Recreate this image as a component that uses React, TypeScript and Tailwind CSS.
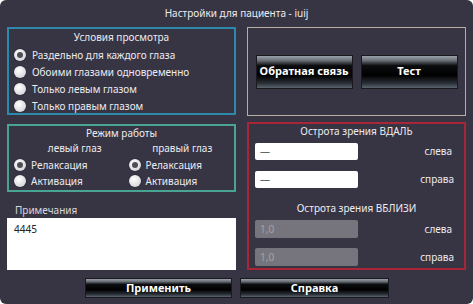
export default function App() {
  const viewModes = [
    { id: 'split', label: 'Раздельно для каждого глаза', checked: true },
    { id: 'both', label: 'Обоими глазами одновременно', checked: false },
    { id: 'left', label: 'Только левым глазом', checked: false },
    { id: 'right', label: 'Только правым глазом', checked: false },
  ]

  const Radio = ({ checked }: { checked: boolean }) => (
    <span className="w-[12px] h-[12px] rounded-full bg-[radial-gradient(circle_at_40%_35%,#ffffff,#c9c9cf)] shadow-[0_0_1px_#000] flex items-center justify-center shrink-0">
      {checked && <span className="w-[6px] h-[6px] rounded-full bg-[#4f4f53]" />}
    </span>
  )

  const GlossButton = ({ label, className }: { label: string; className: string }) => (
    <button
      className={
        'border border-[#1a1a1e] bg-[linear-gradient(to_bottom,#9aa0a8_0%,#6a7078_14%,#0c0d0f_30%,#000000_60%,#2a2f36_85%,#5a6470_100%)] text-white font-bold text-[11px] flex items-center justify-center ' +
        className
      }
    >
      {label}
    </button>
  )

  return (
    <div className="w-[473px] h-[304px] bg-white">
      <div className="w-full h-full bg-[#373544] rounded-[6px] text-[#ecebf0] text-[10px] font-['Noto_Sans',sans-serif] flex flex-col">
        {/* Title */}
        <div className="h-[27px] flex items-center justify-center">
          Настройки для пациента - iuij
        </div>

        <div className="flex gap-[11px] px-[7px]">
          {/* Left column */}
          <div className="w-[229px] flex flex-col">
            <div className="h-[88px] border-2 border-[#2d88ab] px-[5px]">
              <div className="text-center mt-[1px] mb-[3px]">Условия просмотра</div>
              <div className="flex flex-col gap-[3px]">
                {viewModes.map((m) => (
                  <div key={m.id} className="flex items-center gap-[6px] h-[14px]">
                    <Radio checked={m.checked} />
                    <span>{m.label}</span>
                  </div>
                ))}
              </div>
            </div>

            <div className="h-[68px] mt-[9px] border-2 border-[#4aa493] px-[5px]">
              <div className="text-center">Режим работы</div>
              <div className="grid grid-cols-2">
                <div className="flex flex-col">
                  <div className="text-center pl-[14px] mb-[1px]">левый глаз</div>
                  <div className="flex items-center gap-[5px] h-[16px]">
                    <Radio checked />
                    <span>Релаксация</span>
                  </div>
                  <div className="flex items-center gap-[5px] h-[16px]">
                    <Radio checked={false} />
                    <span>Активация</span>
                  </div>
                </div>
                <div className="flex flex-col">
                  <div className="text-center pl-[14px] mb-[1px]">правый глаз</div>
                  <div className="flex items-center gap-[5px] h-[16px] pl-[7px]">
                    <Radio checked />
                    <span>Релаксация</span>
                  </div>
                  <div className="flex items-center gap-[5px] h-[16px] pl-[7px]">
                    <Radio checked={false} />
                    <span>Активация</span>
                  </div>
                </div>
              </div>
            </div>

            <div className="mt-[11px] pl-[8px] h-[14px] flex items-center text-[#d8d6de]">Примечания</div>
            <div className="h-[52px] mt-[1px] bg-white text-[#222] px-[7px] pt-[4px]">4445</div>
          </div>

          {/* Right column */}
          <div className="w-[219px] flex flex-col">
            <div className="h-[89px] border border-[#b5aca2] flex items-center justify-center gap-[8px]">
              <GlossButton label="Обратная связь" className="w-[97px] h-[34px]" />
              <GlossButton label="Тест" className="w-[97px] h-[34px]" />
            </div>

            <div className="h-[148px] mt-[6px] border-2 border-[#a82638] px-[6px]">
              <div className="text-center h-[14px]">Острота зрения ВДАЛЬ</div>
              <div className="flex items-center justify-between mt-[5px] h-[17px]">
                <div className="w-[103px] h-[17px] bg-white rounded-[2px] text-[#666] px-[5px] flex items-center">—</div>
                <span className="pr-[6px]">слева</span>
              </div>
              <div className="flex items-center justify-between mt-[11px] h-[17px]">
                <div className="w-[103px] h-[17px] bg-white rounded-[2px] text-[#666] px-[5px] flex items-center">—</div>
                <span className="pr-[4px]">справа</span>
              </div>
              <div className="text-center mt-[13px] h-[14px]">Острота зрения ВБЛИЗИ</div>
              <div className="flex items-center justify-between mt-[5px] h-[18px]">
                <div className="w-[103px] h-[18px] bg-[#76757d] rounded-[2px] text-[#a3a2a8] px-[5px] flex items-center">1,0</div>
                <span className="pr-[6px]">слева</span>
              </div>
              <div className="flex items-center justify-between mt-[10px] h-[18px]">
                <div className="w-[103px] h-[18px] bg-[#76757d] rounded-[2px] text-[#a3a2a8] px-[5px] flex items-center">1,0</div>
                <span className="pr-[4px]">справа</span>
              </div>
            </div>
          </div>
        </div>

        {/* Bottom buttons */}
        <div className="flex gap-[8px] mt-[8px] pl-[85px]">
          <GlossButton label="Применить" className="w-[147px] h-[20px]" />
          <GlossButton label="Справка" className="w-[149px] h-[20px]" />
        </div>
      </div>
    </div>
  )
}
